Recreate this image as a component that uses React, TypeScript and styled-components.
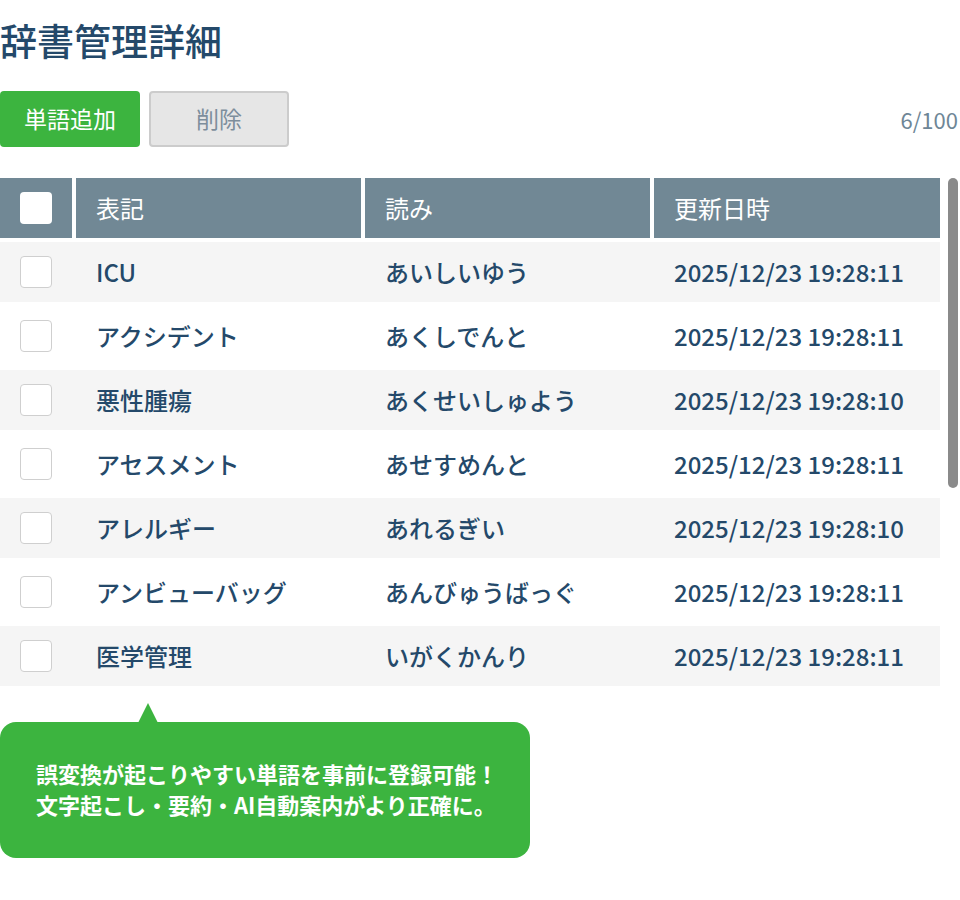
import React from "react";
import styled, { createGlobalStyle } from "styled-components";

const GlobalStyle = createGlobalStyle`
  body {
    margin: 0;
    background: #fff;
    font-family: "Noto Sans CJK JP", "Noto Sans", sans-serif;
  }
`;

const Page = styled.div`
  width: 960px;
  padding-top: 14px;
  color: #24496a;
`;

const Title = styled.h1`
  margin: 0;
  font-size: 37px;
  line-height: 52px;
  font-weight: 500;
  color: #24496a;
`;

const Toolbar = styled.div`
  display: flex;
  align-items: center;
  gap: 9px;
  margin-top: 25px;
`;

const Button = styled.button<{ $primary?: boolean }>`
  width: 140px;
  height: 56px;
  padding: 0 0 3px;
  border-radius: 4px;
  font-family: inherit;
  font-size: 23px;
  font-weight: 400;
  cursor: pointer;
  background: ${(p) => (p.$primary ? "#3cb43f" : "#e6e6e6")};
  color: ${(p) => (p.$primary ? "#fff" : "#7d8e9c")};
  border: ${(p) => (p.$primary ? "none" : "2px solid #cccccc")};
`;

const Count = styled.span`
  margin-left: auto;
  padding-right: 2px;
  font-size: 22px;
  color: #6e8696;
`;

const TableWrap = styled.div`
  position: relative;
  margin-top: 31px;
  width: 960px;
`;

const Table = styled.div`
  width: 940px;
  display: flex;
  flex-direction: column;
  gap: 4px;
`;

const Row = styled.div<{ $head?: boolean; $striped?: boolean }>`
  display: grid;
  grid-template-columns: ${(p) =>
    p.$head ? "72px 285px 285px 286px" : "76px 289px 289px 286px"};
  column-gap: ${(p) => (p.$head ? "4px" : "0")};
  height: 60px;
  background: ${(p) => (p.$striped ? "#f5f5f5" : "#fff")};
`;

const Cell = styled.div<{ $head?: boolean; $check?: boolean }>`
  background: ${(p) => (p.$head ? "#718895" : "transparent")};
  color: ${(p) => (p.$head ? "#fff" : "#24496a")};
  font-size: 24px;
  font-weight: ${(p) => (p.$head ? 400 : 500)};
  display: flex;
  align-items: center;
  padding: ${(p) => (p.$check ? "0 0 0 20px" : "0 0 2px 20px")};
  white-space: nowrap;
`;

const Box = styled.span<{ $head?: boolean }>`
  width: 32px;
  height: 32px;
  box-sizing: border-box;
  border-radius: 4px;
  background: #fff;
  border: ${(p) => (p.$head ? "none" : "1.5px solid #cfcfcf")};
`;

const ScrollThumb = styled.div`
  position: absolute;
  top: 0;
  right: 2px;
  width: 10px;
  height: 310px;
  border-radius: 5px;
  background: #8a8a8a;
`;

const Tip = styled.div`
  position: relative;
  margin-top: 36px;
  width: 530px;
  height: 136px;
  box-sizing: border-box;
  border-radius: 16px;
  background: #3cb43f;
  color: #fff;
  font-size: 22px;
  font-weight: 700;
  line-height: 31px;
  padding: 0 0 2px 36px;
  display: flex;
  flex-direction: column;
  justify-content: center;

  &::before {
    content: "";
    position: absolute;
    left: 138px;
    top: -19px;
    border-left: 10px solid transparent;
    border-right: 10px solid transparent;
    border-bottom: 20px solid #3cb43f;
  }
`;

const rows = [
  ["ICU", "あいしいゆう", "2025/12/23 19:28:11"],
  ["アクシデント", "あくしでんと", "2025/12/23 19:28:11"],
  ["悪性腫瘍", "あくせいしゅよう", "2025/12/23 19:28:10"],
  ["アセスメント", "あせすめんと", "2025/12/23 19:28:11"],
  ["アレルギー", "あれるぎい", "2025/12/23 19:28:10"],
  ["アンビューバッグ", "あんびゅうばっぐ", "2025/12/23 19:28:11"],
  ["医学管理", "いがくかんり", "2025/12/23 19:28:11"],
];

export default function App() {
  return (
    <Page>
      <GlobalStyle />
      <Title>辞書管理詳細</Title>
      <Toolbar>
        <Button $primary>単語追加</Button>
        <Button>削除</Button>
        <Count>6/100</Count>
      </Toolbar>
      <TableWrap>
        <Table>
          <Row $head>
            <Cell $head $check>
              <Box $head />
            </Cell>
            <Cell $head>表記</Cell>
            <Cell $head>読み</Cell>
            <Cell $head>更新日時</Cell>
          </Row>
          {rows.map((r, i) => (
            <Row key={r[0]} $striped={i % 2 === 0}>
              <Cell $check>
                <Box />
              </Cell>
              {r.map((v) => (
                <Cell key={v}>{v}</Cell>
              ))}
            </Row>
          ))}
        </Table>
        <ScrollThumb />
      </TableWrap>
      <Tip>
        <div>誤変換が起こりやすい単語を事前に登録可能！</div>
        <div>文字起こし・要約・AI自動案内がより正確に。</div>
      </Tip>
    </Page>
  );
}
